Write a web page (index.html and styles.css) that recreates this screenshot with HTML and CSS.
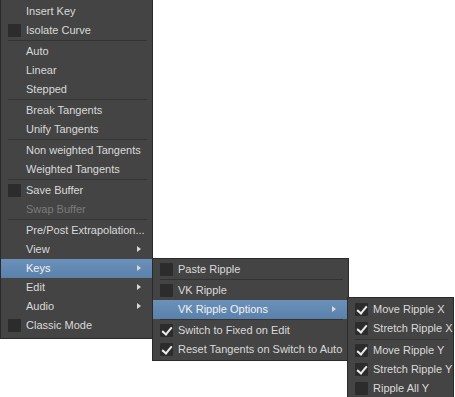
FILE: index.html
```html
<!DOCTYPE html>
<html lang="en">
<head>
    <meta charset="UTF-8">
    <title>Graph Editor Menu</title>
    <link rel="stylesheet" href="styles.css">
</head>
<body>
    <div class="menu main-menu">
        <div class="item">Insert Key</div>
        <div class="item"><span class="box"></span>Isolate Curve</div>
        <div class="sep"></div>
        <div class="item">Auto</div>
        <div class="item">Linear</div>
        <div class="item">Stepped</div>
        <div class="sep"></div>
        <div class="item">Break Tangents</div>
        <div class="item">Unify Tangents</div>
        <div class="sep"></div>
        <div class="item">Non weighted Tangents</div>
        <div class="item">Weighted Tangents</div>
        <div class="sep"></div>
        <div class="item"><span class="box"></span>Save Buffer</div>
        <div class="item disabled">Swap Buffer</div>
        <div class="sep"></div>
        <div class="item">Pre/Post Extrapolation...</div>
        <div class="item sub">View</div>
        <div class="item sub active">Keys</div>
        <div class="item sub">Edit</div>
        <div class="item sub">Audio</div>
        <div class="item"><span class="box"></span>Classic Mode</div>
    </div>

    <div class="menu keys-menu">
        <div class="item"><span class="box"></span>Paste Ripple</div>
        <div class="sep"></div>
        <div class="item"><span class="box"></span>VK Ripple</div>
        <div class="item sub active">VK Ripple Options</div>
        <div class="sep"></div>
        <div class="item"><span class="box checked"></span>Switch to Fixed on Edit</div>
        <div class="item"><span class="box checked"></span>Reset Tangents on Switch to Auto</div>
    </div>

    <div class="menu ripple-menu">
        <div class="item"><span class="box checked"></span>Move Ripple X</div>
        <div class="item"><span class="box checked"></span>Stretch Ripple X</div>
        <div class="sep wide"></div>
        <div class="item"><span class="box checked"></span>Move Ripple Y</div>
        <div class="item"><span class="box checked"></span>Stretch Ripple Y</div>
        <div class="item"><span class="box"></span>Ripple All Y</div>
    </div>
</body>
</html>
```

FILE: styles.css
```css
body {
    margin: 0;
    background: #ffffff;
    font-family: "Liberation Sans", Arial, sans-serif;
    font-size: 11px;
    position: relative;
    width: 455px;
    height: 397px;
    overflow: hidden;
}
.menu {
    background: #444444;
    border: 1px solid #2a2a2a;
    padding: 1px 0 1px 0;
    color: #dadada;
    box-sizing: border-box;
}
.main-menu {
    width: 153px;
    margin-top: -1px;
    padding: 2px 0 3px 0;
}
.keys-menu {
    position: absolute;
    left: 152px;
    top: 258px;
    width: 197px;
}
.ripple-menu {
    position: absolute;
    left: 347px;
    top: 297px;
    width: 107px;
    padding-top: 2px;
}
.item {
    position: relative;
    height: 19px;
    line-height: 19px;
    padding-left: 25px;
    white-space: nowrap;
}
.item.disabled {
    color: #7b7b7b;
}
.item.active {
    background: linear-gradient(#6b91b9, #5a81aa);
    color: #f2f2f2;
}
.box {
    position: absolute;
    left: 7px;
    top: 3px;
    width: 13px;
    height: 13px;
    background: #2c2c2c;
    border-radius: 1px;
}
.box.checked::after {
    content: "";
    position: absolute;
    left: 4px;
    top: 1px;
    width: 4px;
    height: 8px;
    border: solid #ececec;
    border-width: 0 2px 2px 0;
    transform: rotate(40deg);
}
.sub::after {
    content: "";
    position: absolute;
    right: 11px;
    top: 6px;
    border-left: 4px solid #d8d8d8;
    border-top: 3px solid transparent;
    border-bottom: 3px solid transparent;
}
.keys-menu .sub::after {
    right: 12px;
}
.sep {
    height: 1px;
    margin: 0 5px 1px 7px;
    background: #333333;
}
.sep.wide {
    margin: 1px 5px 1px 7px;
}
```
